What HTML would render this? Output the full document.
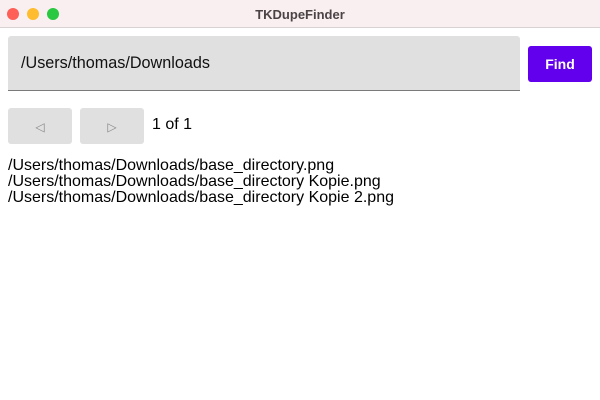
<!DOCTYPE html>
<html><head><style>
body{margin:0;width:600px;height:400px;background:#fff;font-family:"Liberation Sans",sans-serif;position:relative;overflow:hidden}
.tb{position:absolute;left:0;top:0;width:600px;height:28px;background:#f9eff0;border-bottom:1px solid #d8d2d2;box-sizing:border-box}
.dot{position:absolute;top:8px;width:12px;height:12px;border-radius:50%}
.title{position:absolute;top:7px;left:0;width:600px;text-align:center;font-size:13px;font-weight:bold;color:#4a4446}
.field{position:absolute;left:8px;top:36px;width:512px;height:55px;background:#e0e0e0;border-bottom:1px solid #7a7a7a;box-sizing:border-box;border-radius:3px 3px 0 0}
.field span{position:absolute;left:13px;top:18px;font-size:16.2px;color:#111}
.find{position:absolute;left:528px;top:46px;width:64px;height:36px;background:#6200ee;border-radius:3px;color:#fff;font-size:14px;font-weight:bold;text-align:center;line-height:36px}
.nb{position:absolute;top:108px;width:64px;height:36px;background:#e0e0e0;border-radius:3px;color:#888;font-size:12px;text-align:center;line-height:38px}
.pg{position:absolute;left:152px;top:116px;font-size:16px}
.list{position:absolute;left:8px;top:158px;font-size:16px;line-height:16px;color:#000}
</style></head><body>
<div class="tb"><div class="dot" style="left:7px;background:#fe5f57"></div><div class="dot" style="left:27px;background:#febc2e"></div><div class="dot" style="left:47px;background:#28c840"></div><div class="title">TKDupeFinder</div></div>
<div class="field"><span>/Users/thomas/Downloads</span></div>
<div class="find">Find</div>
<div class="nb" style="left:8px">◁</div>
<div class="nb" style="left:80px">▷</div>
<div class="pg">1 of 1</div>
<div class="list">/Users/thomas/Downloads/base_directory.png<br>/Users/thomas/Downloads/base_directory Kopie.png<br>/Users/thomas/Downloads/base_directory Kopie 2.png</div>
</body></html>
